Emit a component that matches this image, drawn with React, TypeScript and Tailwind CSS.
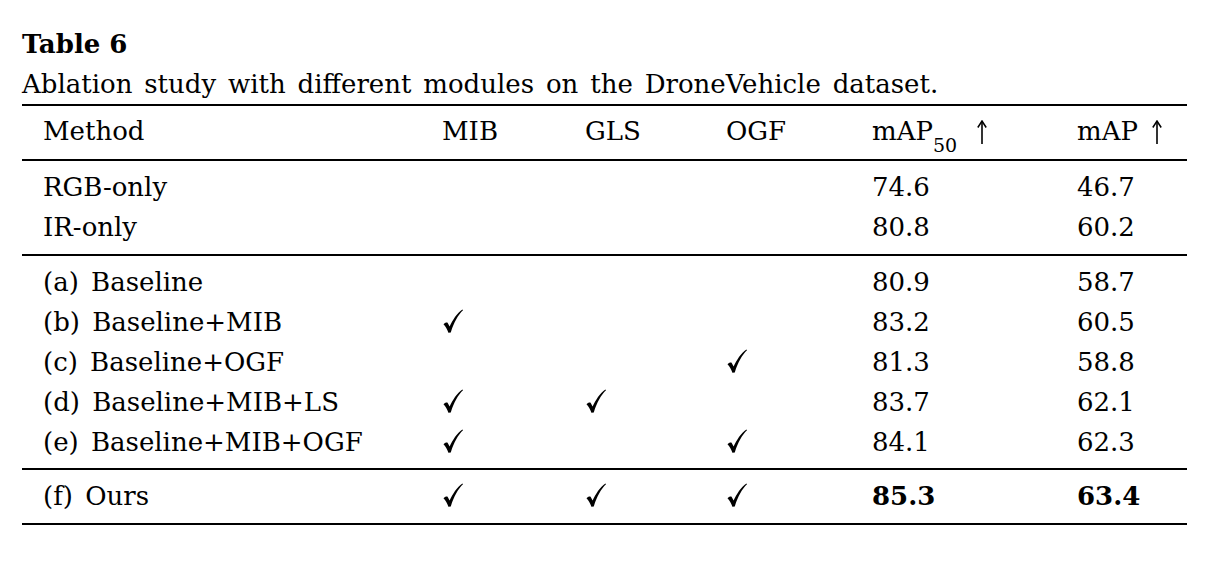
import React from "react";

const rows1 = [
  { m: "RGB-only", a: "", b: "", c: "", p: "74.6", q: "46.7" },
  { m: "IR-only", a: "", b: "", c: "", p: "80.8", q: "60.2" },
];
const rows2 = [
  { m: "(a) Baseline", a: "", b: "", c: "", p: "80.9", q: "58.7" },
  { m: "(b) Baseline+MIB", a: "x", b: "", c: "", p: "83.2", q: "60.5" },
  { m: "(c) Baseline+OGF", a: "", b: "", c: "x", p: "81.3", q: "58.8" },
  { m: "(d) Baseline+MIB+LS", a: "x", b: "x", c: "", p: "83.7", q: "62.1" },
  { m: "(e) Baseline+MIB+OGF", a: "x", b: "", c: "x", p: "84.1", q: "62.3" },
];

const grid = "grid grid-cols-[420px_143px_141px_146px_205px_1fr]";

function Check() {
  return (
    <svg
      width="20"
      height="24"
      viewBox="0 0 20 24"
      className="inline-block align-[-2px] ml-[1px]"
    >
      <path
        d="M0.5 15.2 C2 13.6 3.6 13.2 4.6 13.8 L6.6 17.6 C9.8 10.5 14 4.2 19.4 0.4 L20 1.3 C15.2 6 11 13 7.8 23.4 L5.4 23.8 C4.2 20.2 2.6 17.4 0.5 15.2 Z"
        fill="#000"
      />
    </svg>
  );
}

function Arrow() {
  return (
    <svg
      width="10"
      height="24"
      viewBox="0 0 10 24"
      className="inline-block align-[-4px]"
    >
      <path d="M5 2 L5 24" stroke="#000" strokeWidth="1.6" fill="none" />
      <path d="M0.8 7.5 L5 1 L9.2 7.5" stroke="#000" strokeWidth="1.5" fill="none" />
    </svg>
  );
}

function Row({ r, bold }: { r: any; bold?: boolean }) {
  return (
    <div className={`${grid} h-[40px] leading-[40px]`}>
      <div className="pl-[21px] whitespace-nowrap [word-spacing:4px]">{r.m}</div>
      <div>{r.a ? <Check /> : null}</div>
      <div>{r.b ? <Check /> : null}</div>
      <div>{r.c ? <Check /> : null}</div>
      <div className={bold ? "font-bold" : ""}>{r.p}</div>
      <div className={bold ? "font-bold" : ""}>{r.q}</div>
    </div>
  );
}

export default function App() {
  return (
    <div className="w-[1208px] h-[566px] bg-white text-black font-['DejaVu_Serif',serif] text-[26px]">
      <div className="pl-[22px] pr-[21px] pt-[24px]">
        <div className="font-bold leading-[40px] h-[40px]">Table&nbsp;6</div>
        <div className="leading-[40px] h-[40px] [word-spacing:3.6px] whitespace-nowrap">
          Ablation study with different modules on the DroneVehicle dataset.
        </div>
        <div className="border-t-2 border-b-2 border-black">
          <div className={`${grid} h-[40px] leading-[40px] mt-[5px] mb-[8px]`}>
            <div className="pl-[21px]">Method</div>
            <div>MIB</div>
            <div>GLS</div>
            <div>OGF</div>
            <div className="whitespace-nowrap">
              mAP<sub className="text-[19px] align-[-7px] leading-none">50</sub>
              <span className="ml-[20px]">
                <Arrow />
              </span>
            </div>
            <div className="whitespace-nowrap">
              mAP
              <span className="ml-[14px]">
                <Arrow />
              </span>
            </div>
          </div>
        </div>
        <div className="border-b-2 border-black pt-[6px] pb-[7px]">
          {rows1.map((r, i) => (
            <Row key={i} r={r} />
          ))}
        </div>
        <div className="border-b-2 border-black pt-[6px] pb-[6px]">
          {rows2.map((r, i) => (
            <Row key={i} r={r} />
          ))}
        </div>
        <div className="border-b-2 border-black pt-[6px] pb-[7px]">
          <Row r={{ m: "(f) Ours", a: "x", b: "x", c: "x", p: "85.3", q: "63.4" }} bold />
        </div>
      </div>
    </div>
  );
}
